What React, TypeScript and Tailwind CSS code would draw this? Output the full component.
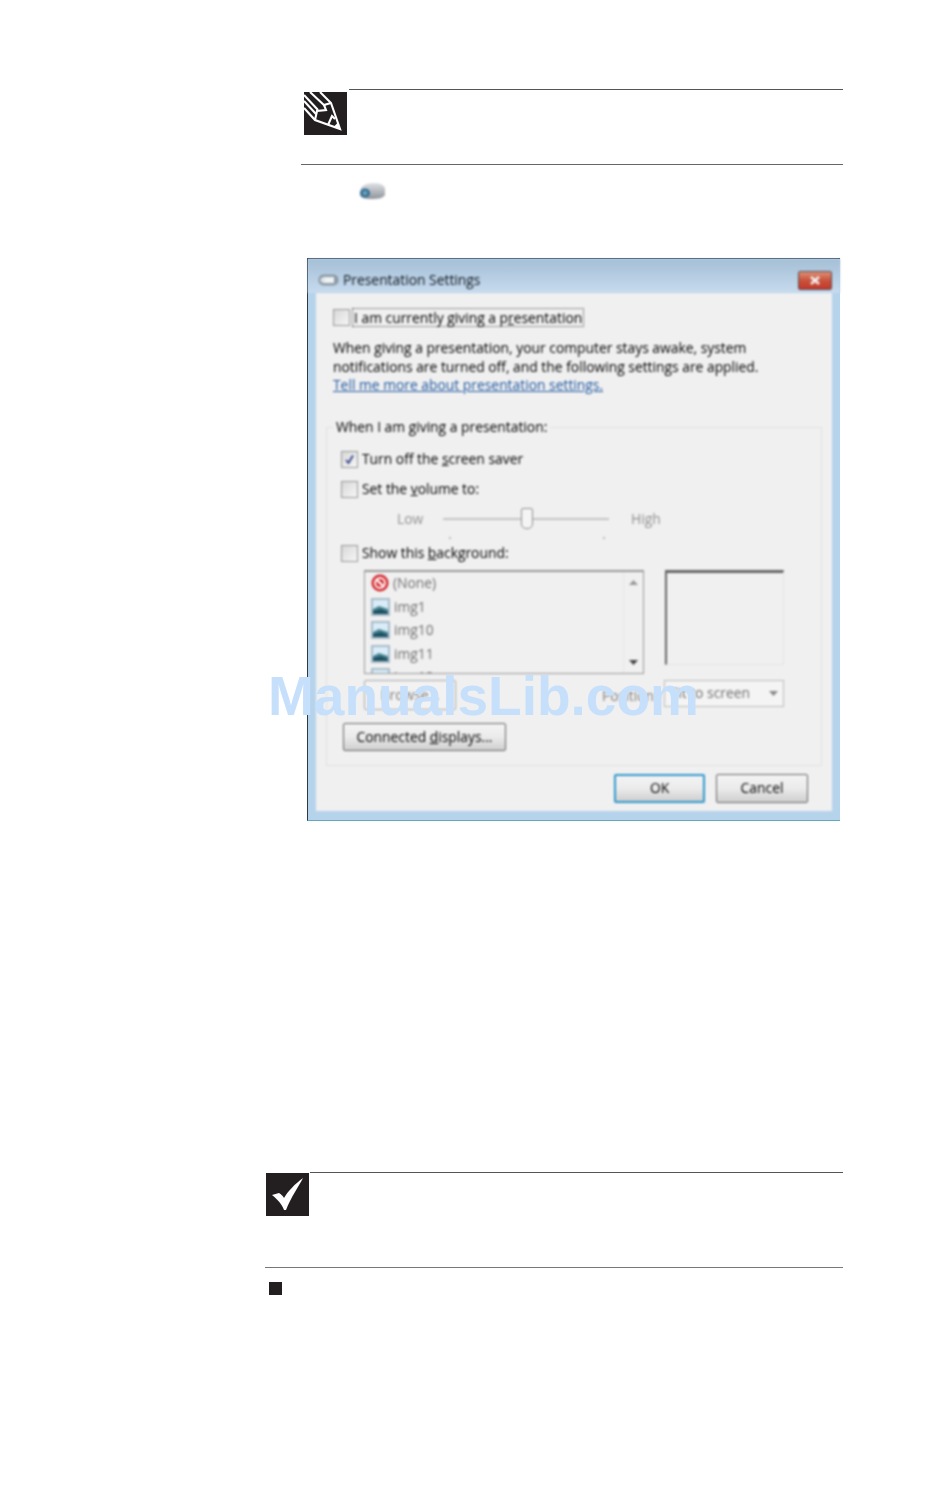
const uiFont = "font-['Open_Sans',sans-serif]";

function PencilIcon() {
  return (
    <svg width="43" height="43" viewBox="0 0 43 43" className="shrink-0">
      <rect width="43" height="43" fill="#231f20" />
      <g fill="none" stroke="#fff" strokeWidth="2.1">
        <path d="M16 0L27 11L36 37L11 28L0 16" />
        <path d="M27 11L20 13L22 18L13 19L11 28" />
        <path d="M0 3L14 18M0 9L12 22M6 0L21 14" />
        <path d="M24 33L28 24L31 27" />
      </g>
      <path d="M36 37L30 34.5L33.5 31Z" fill="#fff" />
    </svg>
  );
}

function CheckIcon() {
  return (
    <svg width="43" height="43" viewBox="0 0 43 43" className="shrink-0">
      <rect width="43" height="43" fill="#231f20" />
      <path d="M37 5C33 13 25 24 20 37L18 37C16 31 11 26 6 22L13 20C15 21 17 23 18 25C22 18 29 11 37 5Z" fill="#fff" />
    </svg>
  );
}

function Projector() {
  return (
    <svg width="27" height="20" viewBox="0 0 27 20" className="ml-[359px] mt-[16px] block [filter:blur(0.8px)]">
      <defs>
        <linearGradient id="pj" x1="0" y1="0" x2="0" y2="1">
          <stop offset="0" stopColor="#dfe2e6" />
          <stop offset="1" stopColor="#8e949b" />
        </linearGradient>
      </defs>
      <path d="M2 7C5 3 10 2 15 2C20 2 24 3 26 7L26 14C24 17 20 18 12 18C6 18 2 17 1 14Z" fill="url(#pj)" />
      <ellipse cx="6" cy="12" rx="5" ry="4.5" fill="#2f6d92" />
      <ellipse cx="6" cy="12" rx="2.5" ry="2.5" fill="#6c9db8" />
    </svg>
  );
}

function Box({ checked = false }: { checked?: boolean }) {
  return (
    <span className="w-[17px] h-[17px] shrink-0 border border-[#999] bg-gradient-to-br from-[#d8d8d8] to-[#f6f6f6] flex items-center justify-center">
      {checked && (
        <svg width="11" height="11" viewBox="0 0 11 11">
          <path d="M2 6L4.5 9L9 1.5" fill="none" stroke="#34418c" strokeWidth="1.8" />
        </svg>
      )}
    </span>
  );
}

function NoneIcon() {
  return (
    <svg width="18" height="18" viewBox="0 0 18 18" className="shrink-0">
      <circle cx="9" cy="9" r="8.5" fill="#d3232a" />
      <circle cx="9" cy="9" r="5" fill="none" stroke="#fff" strokeWidth="2" />
      <path d="M5.5 5.5L12.5 12.5" stroke="#fff" strokeWidth="2.4" />
    </svg>
  );
}

function ThumbIcon() {
  return (
    <svg width="19" height="18" viewBox="0 0 19 18" className="shrink-0">
      <rect width="19" height="18" fill="#a9bccb" />
      <rect x="2" y="2" width="15" height="14" fill="#d9ecf7" />
      <path d="M2 11L8 8L17 11L17 16L2 16Z" fill="#4c8796" />
      <path d="M2 13L10 11L17 14L17 16L2 16Z" fill="#1f5261" />
    </svg>
  );
}

function ListRow({ label, none = false }: { label: string; none?: boolean }) {
  return (
    <div className="h-[23.5px] shrink-0 flex items-center gap-[4px] pl-[6px] text-[#6f6f6f]">
      {none ? <NoneIcon /> : <ThumbIcon />}
      <span>{label}</span>
    </div>
  );
}

function Button({ children, className = "" }: { children: React.ReactNode; className?: string }) {
  return (
    <div
      className={
        "flex items-center justify-center rounded-[2px] border border-[#666] bg-gradient-to-b from-[#f4f4f4] via-[#ebebeb] to-[#cfcfcf] text-[#000] " +
        className
      }
    >
      {children}
    </div>
  );
}

function PresentationDialog() {
  return (
    <div
      className={
        uiFont +
        " ml-[307px] mt-[57px] w-[533px] h-[563px] flex flex-col bg-[#b6d3ec] border-l border-t border-l-[#2b3a46] border-t-[#3a4650] border-b border-b-[#63a9bd] text-[13.85px] leading-[18.5px] text-[#000]"
      }
    >
      {/* title bar */}
      <div className="h-[34px] shrink-0 flex items-center pl-[10px] pr-[8px] pt-[8px] bg-gradient-to-b from-[#a5bfd6] to-[#c7dbee] [filter:blur(0.8px)]">
        <svg width="21" height="12" viewBox="0 0 21 12" className="mr-[4px]">
          <rect x="0.5" y="0.5" width="20" height="11" rx="5" fill="#8d9aa5" />
          <rect x="5" y="3" width="11" height="6" fill="#eef2f5" />
          <circle cx="5" cy="6" r="2.5" fill="#dfe6ea" />
        </svg>
        <span className="text-[#0f1820]">Presentation Settings</span>
        <div className="ml-auto w-[34px] h-[19px] rounded-[2px] border border-[#5f4a50] bg-gradient-to-b from-[#dc8f76] via-[#c9523c] to-[#c2382c] flex items-center justify-center">
          <svg width="12" height="9" viewBox="0 0 12 9">
            <path d="M2 1L10 8M10 1L2 8" stroke="#f3f3f3" strokeWidth="2.4" />
          </svg>
        </div>
      </div>

      {/* frame + client area */}
      <div className="flex-1 flex flex-col px-[8px] pb-[9px] min-h-0">
        <div className="flex-1 bg-[#f0f0f0] pl-[17px] pr-[10px] pt-[15px] flex flex-col [filter:blur(0.8px)]">
          <div className="flex items-center h-[19px] gap-[2px]">
            <Box />
            <span className="h-[19px] px-[1px] border border-dotted border-[#444] text-[#000] whitespace-nowrap">
              I am currently giving a p<u>r</u>esentation
            </span>
          </div>

          <p className="mt-[12px] whitespace-nowrap">When giving a presentation, your computer stays awake, system</p>
          <p className="whitespace-nowrap">notifications are turned off, and the following settings are applied.</p>
          <p className="whitespace-nowrap text-[#1f57a0] underline">Tell me more about presentation settings.</p>

          {/* group box */}
          <fieldset className="mt-[23px] -ml-[7px] w-[496px] h-[348px] border border-[#e2e2e2] pl-[14px] flex flex-col">
            <legend className="-ml-[8px] px-[3px] h-[19px] whitespace-nowrap">When I am giving a presentation:</legend>

            <div className="mt-[13px] h-[19px] flex items-center gap-[4px] whitespace-nowrap">
              <Box checked />
              <span>Turn off the <u>s</u>creen saver</span>
            </div>
            <div className="mt-[11px] h-[19px] flex items-center gap-[4px] whitespace-nowrap">
              <Box />
              <span>Set the <u>v</u>olume to:</span>
            </div>

            {/* volume slider */}
            <div className="mt-[10px] h-[21px] flex items-center text-[#909090]">
              <span className="ml-[56px] w-[46px]">Low</span>
              <div className="relative w-[166px] h-[2px] bg-[#c4c4c4]">
                <div className="absolute left-[78px] -top-[10px] w-[12px] h-[21px] rounded-b-[5px] rounded-t-[2px] border border-[#909090] bg-[#f4f4f4]" />
                <div className="absolute left-[6px] top-[19px] w-[2px] h-[2px] bg-[#bbb]" />
                <div className="absolute left-[160px] top-[19px] w-[2px] h-[2px] bg-[#bbb]" />
              </div>
              <span className="ml-[22px]">High</span>
            </div>

            <div className="mt-[14px] h-[19px] flex items-center gap-[4px] whitespace-nowrap">
              <Box />
              <span>Show this <u>b</u>ackground:</span>
            </div>

            <div className="mt-[7px] flex items-start gap-[21px] ml-[23px]">
              {/* list */}
              <div className="w-[280px] h-[104px] border border-t-2 border-[#999] flex overflow-hidden">
                <div className="flex-1 flex flex-col overflow-hidden">
                  <ListRow label="(None)" none />
                  <ListRow label="img1" />
                  <ListRow label="img10" />
                  <ListRow label="img11" />
                  <ListRow label="img12" />
                </div>
                <div className="w-[20px] border-l border-[#e6e6e6] flex flex-col items-center justify-between py-[8px]">
                  <svg width="9" height="5" viewBox="0 0 9 5"><path d="M4.5 0L9 5H0Z" fill="#999" /></svg>
                  <svg width="9" height="5" viewBox="0 0 9 5"><path d="M4.5 5L9 0H0Z" fill="#444" /></svg>
                </div>
              </div>
              {/* preview */}
              <div className="w-[119px] h-[95px] border-t-[3px] border-l-[2px] border-[#666] border-r border-r-[#e4e4e4] border-b border-b-[#e4e4e4]" />
            </div>

            <div className="mt-[6px] flex items-start ml-[23px]">
              <div className="w-[92px] h-[30px] pt-[1px] rounded-[2px] border border-[#a8a8a8] bg-[#f2f2f2] flex items-center justify-center text-[#808080]">
                Browse...
              </div>
              <span className="ml-[146px] mt-[7px] w-[62px] text-[#808080]">Position:</span>
              <div className="w-[120px] h-[27px] pt-[1px] border border-[#bbb] bg-[#f4f4f4] flex items-center justify-between pl-[6px] pr-[5px] text-[#707070]">
                <span>Fit to screen</span>
                <svg width="9" height="5" viewBox="0 0 9 5"><path d="M0 0H9L4.5 5Z" fill="#888" /></svg>
              </div>
            </div>

            <Button className="mt-[13px] ml-[2px] pt-[1px] w-[163px] h-[28px]">
              <span>Connected <u>d</u>isplays...</span>
            </Button>
          </fieldset>

          <div className="mt-[8px] flex justify-end gap-[11px] pr-[14px]">
            <Button className="w-[91px] h-[29px] !border-[#2f97cc] border-2 from-[#eaf4f8] via-[#e4edf1] to-[#c3d3dc]">OK</Button>
            <Button className="w-[92px] h-[29px]">Cancel</Button>
          </div>
        </div>
      </div>
    </div>
  );
}

export default function App() {
  return (
    <div className="relative w-[950px] h-[1502px] bg-white overflow-hidden pt-[89px]">
      {/* tip note */}
      <div className="ml-[301px] w-[542px] h-[76px] border-b border-[#666]">
        <div className="flex items-start">
          <div className="pl-[3px] pt-[3px] pr-[2px]">
            <PencilIcon />
          </div>
          <div className="flex-1 border-t border-[#555]" />
        </div>
      </div>

      <Projector />
      <PresentationDialog />

      {/* important note */}
      <div className="ml-[265px] mt-[351px] w-[578px] h-[96px] border-b border-[#777]">
        <div className="flex items-start">
          <div className="pl-[1px] pt-[1px] pr-[1px]">
            <CheckIcon />
          </div>
          <div className="flex-1 border-t border-[#555]" />
        </div>
      </div>
      <div className="ml-[269px] mt-[14px] w-[13px] h-[13px] bg-[#231f20]" />

      {/* watermark lies over the page */}
      <div className="absolute left-[268px] top-[664px] font-['Liberation_Sans',sans-serif] font-bold text-[55px] leading-[64px] text-[#c6dffb] whitespace-nowrap">
        ManualsLib.com
      </div>
    </div>
  );
}
